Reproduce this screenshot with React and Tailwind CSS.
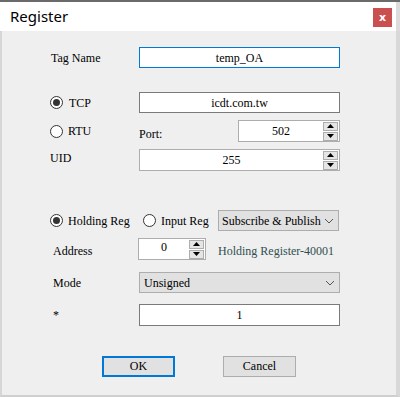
import React from 'react';

const serif = { fontFamily: '"Liberation Serif", "Times New Roman", serif' };

const Radio = ({ checked }) => (
  <span className="w-[13px] h-[13px] rounded-full border border-[#333] bg-white flex items-center justify-center shrink-0">
    {checked && <span className="w-[7px] h-[7px] rounded-full bg-[#333]" />}
  </span>
);

const Chevron = () => (
  <svg width="10" height="6" viewBox="0 0 10 6" className="shrink-0">
    <polyline points="1,1 5,5 9,1" fill="none" stroke="#555" strokeWidth="1" />
  </svg>
);

const SpinButtons = () => (
  <div className="flex flex-col gap-[1px] mr-[1px]">
    <div className="w-[15px] h-[9px] border border-[#adadad] bg-[#e5e5e5] flex items-center justify-center">
      <svg width="7" height="4" viewBox="0 0 7 4"><polygon points="3.5,0 7,4 0,4" fill="#000" /></svg>
    </div>
    <div className="w-[15px] h-[9px] border border-[#adadad] bg-[#e5e5e5] flex items-center justify-center">
      <svg width="7" height="4" viewBox="0 0 7 4"><polygon points="0,0 7,0 3.5,4" fill="#000" /></svg>
    </div>
  </div>
);

const SpinBox = ({ value, className }) => (
  <div className={`h-[22px] border border-[#adadad] bg-white flex items-center ${className}`}>
    <span className="flex-1 text-center">{value}</span>
    <SpinButtons />
  </div>
);

const Label = ({ children }) => (
  <span className="w-[89px] pl-[1px] shrink-0">{children}</span>
);

export default function App() {
  return (
    <div className="w-[400px] h-[397px] bg-white border-t-2 border-[#6a6a6a] flex flex-col overflow-hidden">
      {/* Title bar */}
      <div className="h-[29px] flex items-center justify-between pl-[10px] pr-[4px] bg-white border-r-4 border-[#dcdcdc]">
        <span className="text-[15px] text-black" style={{ fontFamily: '"Noto Sans", "Open Sans", sans-serif' }}>Register</span>
        <div className="w-[19px] h-[19px] mt-[2px] bg-[#c9504f] flex items-center justify-center text-white text-[11px] font-bold leading-none" style={{ fontFamily: '"DejaVu Sans", sans-serif' }}>
          x
        </div>
      </div>

      {/* Body */}
      <div className="flex-1 bg-[#efefef] border-l-2 border-r-4 border-b-2 border-l-[#d6d6d6] border-r-[#d8d8d8] border-b-[#cfcfcf] text-[12px] font-normal text-black pl-[48px] flex flex-col" style={serif}>
        {/* Tag Name */}
        <div className="flex items-center h-[21px] mt-[16px]">
          <Label>Tag Name</Label>
          <div className="w-[201px] h-[21px] border border-[#0078d7] bg-white flex items-center justify-center">temp_OA</div>
        </div>

        {/* TCP */}
        <div className="flex items-center h-[21px] mt-[24px]">
          <span className="w-[89px] flex items-center shrink-0">
            <Radio checked />
            <span className="ml-[6px]">TCP</span>
          </span>
          <div className="w-[201px] h-[21px] border border-[#7a7a7a] bg-white flex items-center justify-center">icdt.com.tw</div>
        </div>

        {/* RTU + Port */}
        <div className="flex items-center h-[22px] mt-[7px]">
          <span className="w-[89px] flex items-center shrink-0">
            <Radio />
            <span className="ml-[5px]">RTU</span>
          </span>
          <span className="w-[99px] mt-[6px]">Port:</span>
          <SpinBox value="502" className="w-[102px]" />
        </div>

        {/* UID */}
        <div className="flex items-center h-[22px] mt-[7px]">
          <span className="w-[89px] shrink-0 -mt-[5px]">UID</span>
          <SpinBox value="255" className="w-[201px]" />
        </div>

        {/* Holding / Input / Select */}
        <div className="flex items-center h-[21px] mt-[39px]">
          <span className="flex items-center w-[93px] shrink-0">
            <Radio checked />
            <span className="ml-[5px]">Holding Reg</span>
          </span>
          <span className="flex items-center w-[75px] shrink-0">
            <Radio />
            <span className="ml-[5px]">Input Reg</span>
          </span>
          <div className="w-[121px] h-[21px] border border-[#adadad] bg-[#e1e1e1] flex items-center justify-between pl-[3px] pr-[4px]">
            <span>Subscribe &amp; Publish</span>
            <Chevron />
          </div>
        </div>

        {/* Address */}
        <div className="flex items-center h-[22px] mt-[7px]">
          <span className="w-[88px] pl-[3px] shrink-0 mt-[3px]">Address</span>
          <div className="w-[68px] h-[22px] border border-[#adadad] bg-white flex items-center">
            <span className="flex-1 text-center -mt-[5px]">0</span>
            <SpinButtons />
          </div>
          <span className="ml-[12px] text-[#2f4f4f] mt-[3px]">Holding Register-40001</span>
        </div>

        {/* Mode */}
        <div className="flex items-center h-[21px] mt-[12px]">
          <span className="w-[89px] pl-[3px] shrink-0">Mode</span>
          <div className="w-[201px] h-[21px] border border-[#adadad] bg-[#e1e1e1] flex items-center justify-between pl-[4px] pr-[4px]">
            <span>Unsigned</span>
            <Chevron />
          </div>
        </div>

        {/* Multiplier */}
        <div className="flex items-center h-[22px] mt-[11px]">
          <span className="w-[89px] pl-[3px] shrink-0">*</span>
          <div className="w-[201px] h-[22px] border border-[#7a7a7a] bg-white flex items-center justify-center">1</div>
        </div>

        {/* Buttons */}
        <div className="flex items-center h-[22px] mt-[29px] pl-[52px] gap-[48px]">
          <button className="w-[73px] h-[21px] border-2 border-[#0078d7] bg-[#e1e1e1] flex items-center justify-center">OK</button>
          <button className="w-[73px] h-[21px] border border-[#adadad] bg-[#e1e1e1] flex items-center justify-center">Cancel</button>
        </div>
      </div>
    </div>
  );
}
